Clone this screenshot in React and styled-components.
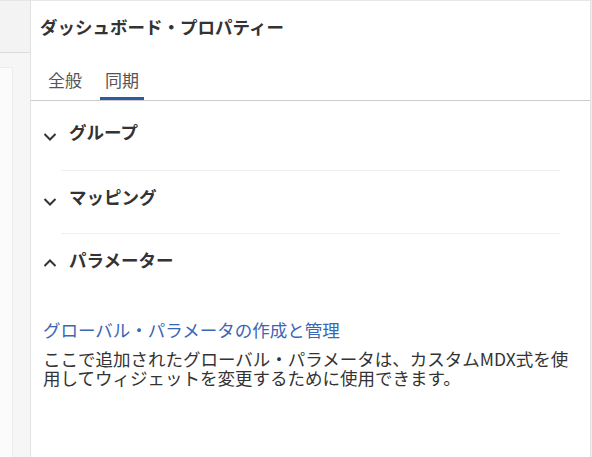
import React, { useState } from "react";
import styled, { createGlobalStyle } from "styled-components";

const GlobalStyle = createGlobalStyle`
  html, body {
    margin: 0;
    padding: 0;
    background: #ffffff;
  }
  body {
    font-family: "Noto Sans CJK JP", "Noto Sans", sans-serif;
    color: #333333;
  }
`;

const Page = styled.div`
  display: flex;
  width: 592px;
  height: 457px;
  overflow: hidden;
  border-top: 1px solid #e6e6e6;
  box-sizing: border-box;
`;

const SideStrip = styled.div`
  width: 30px;
  flex-shrink: 0;
  display: flex;
  flex-direction: column;
  background: #f6f6f6;
`;

const StripHeader = styled.div`
  height: 51px;
  background: #f3f3f3;
  border-bottom: 1px solid #dcdcdc;
`;

const StripBody = styled.div`
  flex: 1;
  padding-top: 14px;
  display: flex;
`;

const StripCard = styled.div`
  width: 12px;
  background: #fbfbfb;
  border-top: 1px solid #ececec;
  border-right: 1px solid #ececec;
`;

const Panel = styled.div`
  flex: 1;
  display: flex;
  flex-direction: column;
  background: #ffffff;
  border-left: 1px solid #e2e2e2;
  border-right: 1px solid #e2e2e2;
`;

const RightEdge = styled.div`
  width: 1px;
  flex-shrink: 0;
  background: #eeeeee;
`;

const Title = styled.h1`
  margin: 0;
  padding: 14px 10px 0 9px;
  height: 41px;
  font-size: 17.5px;
  font-weight: 700;
  line-height: 24px;
  color: #333333;
`;

const TabBar = styled.div`
  display: flex;
  gap: 13px;
  padding: 0 10px 0 12px;
  border-bottom: 1px solid #cccccc;
`;

const Tab = styled.button`
  border: none;
  background: none;
  margin: 0;
  padding: 12px 5px 5px 5px;
  height: 44px;
  font-family: inherit;
  font-size: 17px;
  line-height: 24px;
  color: #555555;
  cursor: pointer;
  border-bottom: 3px solid ${(p) => (p.$active ? "#2c5aa5" : "transparent")};
  box-sizing: border-box;
`;

const Sections = styled.div`
  padding: 5px 30px 0 12px;
`;

const Section = styled.div`
  border-bottom: ${(p) => (p.$last ? "none" : "1px solid #efefef")};
  margin-left: 18px;
`;

const SectionHead = styled.button`
  display: flex;
  align-items: flex-start;
  gap: 12px;
  width: calc(100% + 18px);
  border: none;
  background: none;
  padding: 14px 0 ${(p) => p.$pb}px 0;
  margin: 0 0 0 -18px;
  font-family: inherit;
  font-size: 17.5px;
  font-weight: 700;
  line-height: 24px;
  color: #333333;
  cursor: pointer;
  text-align: left;
`;

const Chevron = styled.svg`
  width: 14px;
  height: 8px;
  flex-shrink: 0;
  margin-top: ${(p) => (p.$open ? 11 : 13)}px;
`;

const SectionBody = styled.div`
  margin: 0 -18px 0 -18px;
  padding-top: 47px;
`;

const HelpLink = styled.a`
  display: block;
  font-size: 17.5px;
  line-height: 22px;
  color: #3a66b6;
  text-decoration: none;
  cursor: pointer;
`;

const HelpText = styled.p`
  margin: 8px 0 0 0;
  font-size: 17.5px;
  line-height: 19px;
  color: #333333;
`;

const ChevronIcon = ({ open }) => (
  <Chevron viewBox="0 0 14 8" $open={open}>
    <polyline
      points={open ? "1.5,7 7,1.5 12.5,7" : "1.5,1 7,6.5 12.5,1"}
      fill="none"
      stroke="#333"
      strokeWidth="2"
    />
  </Chevron>
);

const sections = [
  { id: "group", label: "グループ", pb: 26 },
  { id: "mapping", label: "マッピング", pb: 24 },
  { id: "params", label: "パラメーター", pb: 0 },
];

const App = () => {
  const [tab, setTab] = useState("sync");
  const [open, setOpen] = useState("params");

  return (
    <>
      <GlobalStyle />
      <Page>
        <SideStrip>
          <StripHeader />
          <StripBody>
            <StripCard />
          </StripBody>
        </SideStrip>
        <Panel>
          <Title>ダッシュボード・プロパティー</Title>
          <TabBar>
            <Tab $active={tab === "general"} onClick={() => setTab("general")}>
              全般
            </Tab>
            <Tab $active={tab === "sync"} onClick={() => setTab("sync")}>
              同期
            </Tab>
          </TabBar>
          <Sections>
            {sections.map((s, i) => (
              <Section key={s.id} $last={i === sections.length - 1}>
                <SectionHead
                  $pb={s.pb}
                  onClick={() => setOpen(open === s.id ? null : s.id)}
                >
                  <ChevronIcon open={open === s.id} />
                  {s.label}
                </SectionHead>
                {open === s.id && s.id === "params" && (
                  <SectionBody>
                    <HelpLink>グローバル・パラメータの作成と管理</HelpLink>
                    <HelpText>
                      ここで追加されたグローバル・パラメータは、カスタムMDX式を使用してウィジェットを変更するために使用できます。
                    </HelpText>
                  </SectionBody>
                )}
              </Section>
            ))}
          </Sections>
        </Panel>
        <RightEdge />
      </Page>
    </>
  );
};

export default App;
